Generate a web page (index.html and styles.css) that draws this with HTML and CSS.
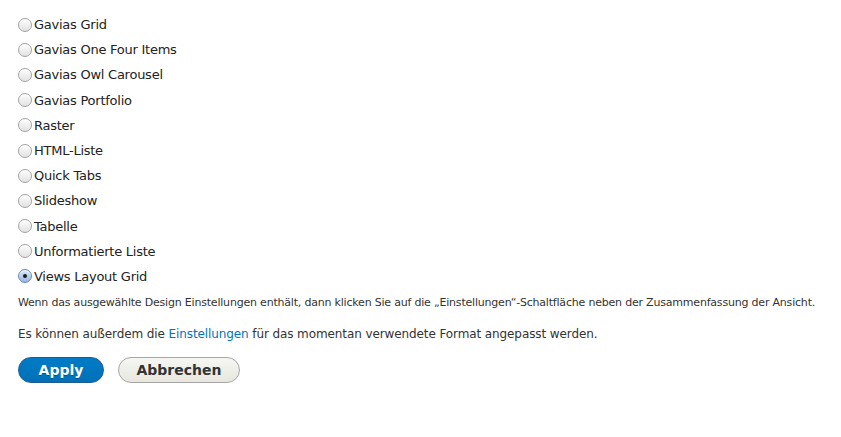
FILE: index.html
```html
<!DOCTYPE html>
<html lang="de">
<head>
<meta charset="utf-8">
<link rel="stylesheet" href="styles.css">
</head>
<body>
<form class="form">
  <div class="radios">
    <label class="opt"><input type="radio" name="style"><span>Gavias Grid</span></label>
    <label class="opt"><input type="radio" name="style"><span>Gavias One Four Items</span></label>
    <label class="opt"><input type="radio" name="style"><span>Gavias Owl Carousel</span></label>
    <label class="opt"><input type="radio" name="style"><span>Gavias Portfolio</span></label>
    <label class="opt"><input type="radio" name="style"><span>Raster</span></label>
    <label class="opt"><input type="radio" name="style"><span>HTML-Liste</span></label>
    <label class="opt"><input type="radio" name="style"><span>Quick Tabs</span></label>
    <label class="opt"><input type="radio" name="style"><span>Slideshow</span></label>
    <label class="opt"><input type="radio" name="style"><span>Tabelle</span></label>
    <label class="opt"><input type="radio" name="style"><span>Unformatierte Liste</span></label>
    <label class="opt"><input type="radio" name="style" checked><span>Views Layout Grid</span></label>
  </div>
  <p class="desc">Wenn das ausgewählte Design Einstellungen enthält, dann klicken Sie auf die „Einstellungen“-Schaltfläche neben der Zusammenfassung der Ansicht.</p>
  <p class="note">Es können außerdem die <a href="#" class="link">Einstellungen</a> für das momentan verwendete Format angepasst werden.</p>
  <div class="actions">
    <button type="button" class="btn btn-primary">Apply</button>
    <button type="button" class="btn btn-default">Abbrechen</button>
  </div>
</form>
</body>
</html>
```
FILE: styles.css
```css
html, body {
  margin: 0;
  padding: 0;
  background: #fff;
}
body {
  font-family: "DejaVu Sans", "Lucida Grande", sans-serif;
  color: #333;
}
.form {
  padding: 12px 18px 0 18px;
}
.radios {
  display: flex;
  flex-direction: column;
}
.opt {
  display: flex;
  align-items: center;
  height: 25.2px;
  font-size: 13px;
  color: #222;
  letter-spacing: -0.25px;
}
.opt input {
  appearance: none;
  -webkit-appearance: none;
  margin: 0 2px 0 0;
  width: 14px;
  height: 14px;
  border-radius: 50%;
  border: 1px solid #a3a3a3;
  background: linear-gradient(#fdfdfd, #e2e2e2);
  box-shadow: inset 0 1px 1px rgba(255,255,255,0.8);
  position: relative;
  flex: none;
}
.opt input:checked {
  border-color: #6a88b0;
  background: linear-gradient(#dbe9f8, #93b8e4);
}
.opt input:checked::after {
  content: "";
  position: absolute;
  left: 4px;
  top: 4px;
  width: 4px;
  height: 4px;
  border-radius: 50%;
  background: #1a1a1a;
}
.desc {
  margin: 6px 0 0 0;
  font-size: 11px;
  line-height: 16px;
  color: #333;
  letter-spacing: -0.2px;
}
.note {
  margin: 14px 0 0 0;
  font-size: 12px;
  line-height: 18px;
  color: #333;
  letter-spacing: -0.1px;
}
.link {
  color: #0074bd;
  text-decoration: none;
}
.actions {
  display: flex;
  gap: 14px;
  margin-top: 14px;
}
.btn {
  font-family: "DejaVu Sans", "Lucida Grande", sans-serif;
  font-weight: bold;
  font-size: 14px;
  height: 26px;
  border-radius: 13px;
  padding: 0 16px;
  cursor: pointer;
}
.btn-primary {
  width: 86px;
  color: #fff;
  background: linear-gradient(#007bc6, #0071b8);
  border: 1px solid #1e5c90;
  text-shadow: 0 1px 0 rgba(0,0,0,0.3);
}
.btn-default {
  width: 122px;
  color: #333;
  background: linear-gradient(#f6f6f3, #e7e7df);
  border: 1px solid #a6a6a6;
}
```
